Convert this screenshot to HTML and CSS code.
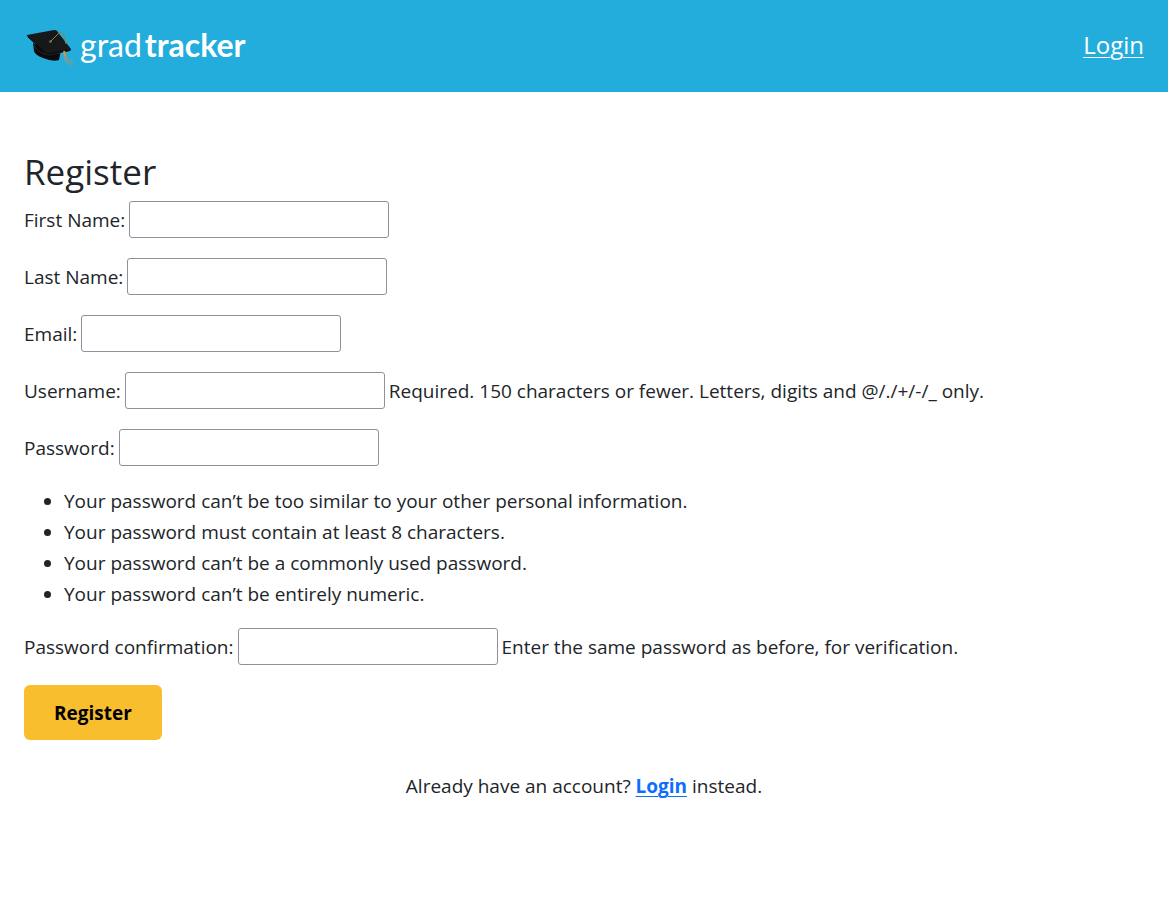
FILE: index.html
```html
<!DOCTYPE html>
<html lang="en">
<head>
<meta charset="utf-8">
<meta name="viewport" content="width=device-width, initial-scale=1">
<title>Register | gradtracker</title>
<link rel="stylesheet" href="styles.css">
</head>
<body>
<header class="topbar">
  <a class="brand" href="#">
    <svg class="brand-cap" viewBox="0 0 60 50" aria-hidden="true">
      <path d="M13 23 L14 31 Q15 35 23 38 Q33 42 39 40 L41 30 L28 31Z" fill="#080a0b"/>
      <path d="M14 25 Q16 32 28 35 L40 33" fill="none" stroke="#292a2c" stroke-width="1"/>
      <path d="M7 15 L34 10 Q36 9.500 37 11 L51 29 Q51 31 48 31.500 L29 35 Q27 35 26 34 L8 17 Q6 15 7 15Z" fill="#171819"/>
      <path d="M8 17 L27 34 L50 30" fill="none" stroke="#080909" stroke-width="1"/>
      <path d="M31 21 L38 14 Q42 10 44 16 L46 24" fill="none" stroke="#987d4f" stroke-width="1"/>
      <circle cx="30.500" cy="21.500" r="1.300" fill="#77716a"/>
      <path d="M44 31 L45 36" stroke="#e4942f" stroke-width="2"/>
      <path d="M44 36 Q45 43 51 46 M45 35 Q46 42 53 44 M46 35 Q47 40 53 41" fill="none" stroke="#a29772" stroke-width="1"/>
    </svg>
    <span class="brand-name">grad<b class="brand-strong">tracker</b></span>
  </a>
  <a class="topbar-link" href="#">Login</a>
</header>
<main class="page">
  <h1 class="title">Register</h1>
  <form class="form">
    <div class="field"><label class="label" for="first">First Name:</label><input class="input" id="first" type="text"></div>
    <div class="field"><label class="label" for="last">Last Name:</label><input class="input" id="last" type="text"></div>
    <div class="field"><label class="label" for="email">Email:</label><input class="input" id="email" type="email"></div>
    <div class="field"><label class="label" for="user">Username:</label><input class="input" id="user" type="text"><span class="help">Required. 150 characters or fewer. Letters, digits and @/./+/-/_ only.</span></div>
    <div class="field"><label class="label" for="pass">Password:</label><input class="input" id="pass" type="password"></div>
    <ul class="rules">
      <li>Your password can’t be too similar to your other personal information.</li>
      <li>Your password must contain at least 8 characters.</li>
      <li>Your password can’t be a commonly used password.</li>
      <li>Your password can’t be entirely numeric.</li>
    </ul>
    <div class="field"><label class="label" for="confirm">Password confirmation:</label><input class="input" id="confirm" type="password"><span class="help">Enter the same password as before, for verification.</span></div>
    <button class="submit" type="submit">Register</button>
  </form>
  <p class="alternate">Already have an account? <a class="alternate-link" href="#">Login</a> instead.</p>
</main>
</body>
</html>
```
FILE: styles.css
```css
* {
  box-sizing: border-box;
}

body {
  margin: 0;
  background: #fff;
  color: #212529;
  font-family: "Open Sans", "Noto Sans", sans-serif;
  font-size: 19px;
  line-height: 31px;
}

.topbar {
  display: flex;
  align-items: center;
  justify-content: space-between;
  padding: 20px 24px 22px 20px;
  background: #22addd;
}

.brand {
  display: flex;
  align-items: center;
  color: #fff;
  text-decoration: none;
}

.brand-cap {
  width: 60px;
  height: 50px;
}

.brand-name {
  display: flex;
  gap: 3px;
  font-family: Lato, sans-serif;
  font-size: 32px;
  font-weight: 400;
  line-height: 50px;
}

.brand-strong {
  font-weight: 700;
}

.topbar-link {
  padding-bottom: 2px;
  color: #fff;
  font-size: 24px;
  text-decoration-thickness: 1px;
  text-underline-offset: 3px;
}

.page {
  padding: 56px 24px;
}

.title {
  margin: 0 0 5px;
  font-size: 35px;
  font-weight: 400;
  line-height: 48px;
}

.form {
  display: flex;
  flex-direction: column;
  align-items: flex-start;
  gap: 20px;
}

.field {
  display: flex;
  align-items: center;
  gap: 4px;
}

.label,
.help {
  padding-top: 2px;
}

.input {
  width: 260px;
  height: 37px;
  padding: 2px 4px;
  border: 1px solid #8f8f9d;
  border-radius: 3px;
  background: #fff;
  color: inherit;
  font: inherit;
}

.rules {
  margin: 0 0 -2px;
  padding-left: 40px;
}

.submit {
  padding: 13px 30px 11px;
  border: 0;
  border-radius: 6px;
  background: #f8be2e;
  color: #000;
  font: inherit;
  font-weight: 700;
}

.alternate {
  margin: 31px 0 0;
  text-align: center;
}

.alternate-link {
  color: #0d6efd;
  font-weight: 700;
  text-decoration-thickness: 1px;
  text-underline-offset: 3px;
}
```
